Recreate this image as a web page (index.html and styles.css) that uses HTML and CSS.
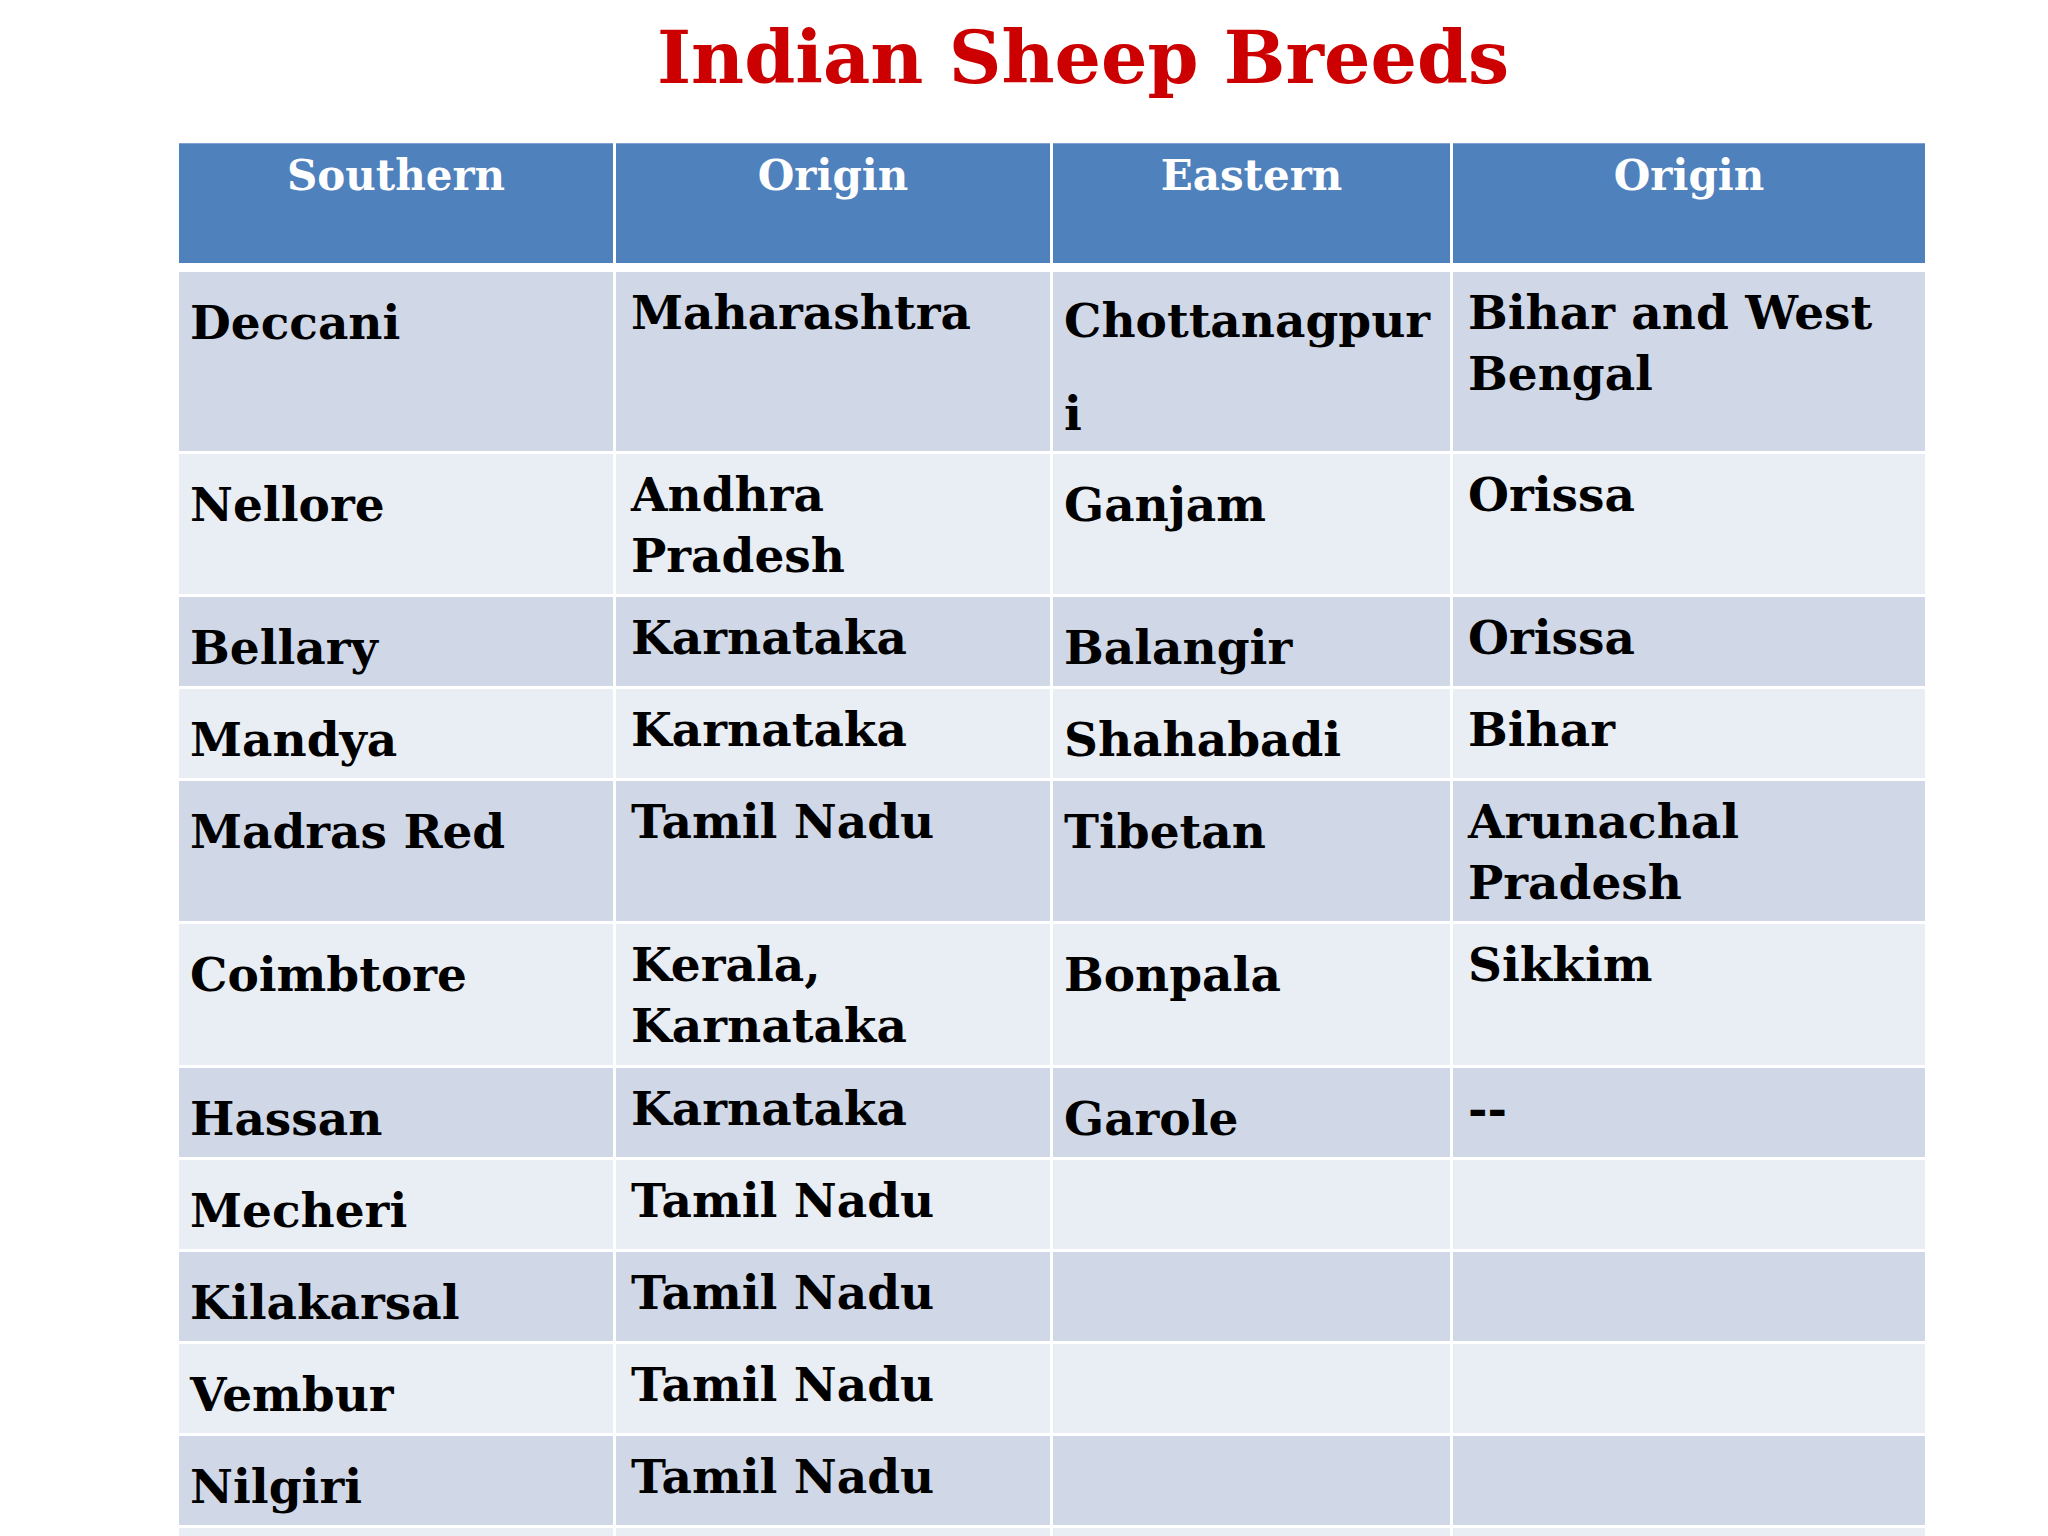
FILE: index.html
```html
<!DOCTYPE html>
<html lang="en">
<head>
<meta charset="utf-8">
<title>Indian Sheep Breeds</title>
<link rel="stylesheet" href="styles.css">
</head>
<body>
<h1 class="title">Indian Sheep Breeds</h1>
<table class="breeds">
  <colgroup>
    <col class="c1"><col class="c2"><col class="c3"><col class="c4">
  </colgroup>
  <thead>
    <tr class="head">
      <th>Southern</th><th>Origin</th><th>Eastern</th><th>Origin</th>
    </tr>
  </thead>
  <tbody>
    <tr class="dark h3">
      <td class="name">Deccani</td><td class="orig">Maharashtra</td><td class="name tall">Chottanagpur<span class="wrap">i</span></td><td class="orig">Bihar and West Bengal</td>
    </tr>
    <tr class="light h2">
      <td class="name">Nellore</td><td class="orig">Andhra Pradesh</td><td class="name">Ganjam</td><td class="orig">Orissa</td>
    </tr>
    <tr class="dark h1">
      <td class="name">Bellary</td><td class="orig">Karnataka</td><td class="name">Balangir</td><td class="orig">Orissa</td>
    </tr>
    <tr class="light h1">
      <td class="name">Mandya</td><td class="orig">Karnataka</td><td class="name">Shahabadi</td><td class="orig">Bihar</td>
    </tr>
    <tr class="dark h2">
      <td class="name">Madras Red</td><td class="orig">Tamil Nadu</td><td class="name">Tibetan</td><td class="orig">Arunachal Pradesh</td>
    </tr>
    <tr class="light h2b">
      <td class="name">Coimbtore</td><td class="orig">Kerala, Karnataka</td><td class="name">Bonpala</td><td class="orig">Sikkim</td>
    </tr>
    <tr class="dark h1">
      <td class="name">Hassan</td><td class="orig">Karnataka</td><td class="name">Garole</td><td class="orig">--</td>
    </tr>
    <tr class="light h1">
      <td class="name">Mecheri</td><td class="orig">Tamil Nadu</td><td class="name"></td><td class="orig"></td>
    </tr>
    <tr class="dark h1">
      <td class="name">Kilakarsal</td><td class="orig">Tamil Nadu</td><td class="name"></td><td class="orig"></td>
    </tr>
    <tr class="light h1">
      <td class="name">Vembur</td><td class="orig">Tamil Nadu</td><td class="name"></td><td class="orig"></td>
    </tr>
    <tr class="dark h1">
      <td class="name">Nilgiri</td><td class="orig">Tamil Nadu</td><td class="name"></td><td class="orig"></td>
    </tr>
    <tr class="light h1">
      <td class="name"></td><td class="orig"></td><td class="name"></td><td class="orig"></td>
    </tr>
  </tbody>
</table>
</body>
</html>
```

FILE: styles.css
```css
html, body {
  margin: 0;
  padding: 0;
  background: #ffffff;
  overflow: hidden;
}

body {
  font-family: "DejaVu Serif", "Liberation Serif", serif;
  font-weight: bold;
  color: #000000;
}

.title {
  margin: 0;
  padding-top: 13px;
  padding-left: 118px;
  height: 89px;
  font-size: 73px;
  line-height: 89px;
  font-weight: bold;
  color: #cc0000;
  text-align: center;
}

.breeds {
  margin-top: 38px;
  margin-left: 176px;
  width: 1752px;
  table-layout: fixed;
  border-collapse: separate;
  border-spacing: 3px;
}

.c1 { width: 434px; }
.c2 { width: 434px; }
.c3 { width: 397px; }
.c4 { width: 472px; }

.head { height: 126px; }

.head th {
  background: #4f81bd;
  color: #ffffff;
  font-size: 42px;
  line-height: 52px;
  font-weight: bold;
  text-align: center;
  vertical-align: top;
  padding: 6px 0 0 0;
  border-top: 1px solid #7fa2d2;
  border-bottom: 6px solid #ffffff;
}

.breeds td {
  font-size: 47px;
  line-height: 61px;
  vertical-align: top;
  text-align: left;
  white-space: normal;
}

.breeds td.name {
  padding: 20px 8px 0 11px;
}

.breeds td.orig {
  padding: 10px 8px 0 15px;
}

.breeds td.tall {
  padding-top: 18px;
  white-space: nowrap;
}

.wrap {
  display: block;
  margin-top: 32px;
}

.h3 { height: 179px; }
.h2 { height: 140px; }
.h2b { height: 141px; }
.h1 { height: 89px; }

.dark td { background: #d0d8e8; }
.light td { background: #e9edf4; }
```
